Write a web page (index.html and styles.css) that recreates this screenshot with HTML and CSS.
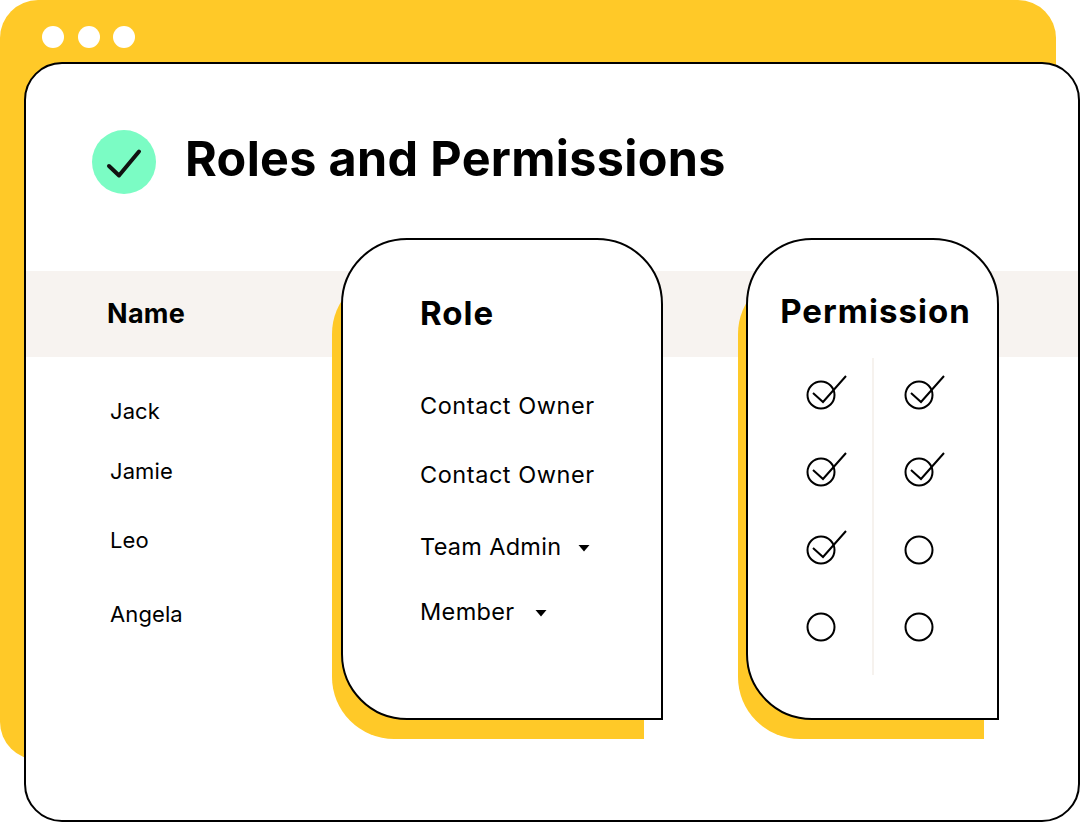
FILE: index.html
```html
<!DOCTYPE html>
<html lang="en">
<head>
<meta charset="utf-8">
<title>Roles and Permissions</title>
<link rel="stylesheet" href="styles.css">
</head>
<body>
<main class="canvas">
  <div class="backdrop">
    <div class="dots"><span class="dot"></span><span class="dot"></span><span class="dot"></span></div>
  </div>
  <section class="window">
    <header class="head">
      <span class="badge">
        <svg class="badge-check" width="64" height="64" viewBox="0 0 64 64"><path d="M17 36 L27 45.500 L47 21.500" /></svg>
      </span>
      <h1 class="title">Roles and Permissions</h1>
    </header>
    <div class="band"><span class="band-label">Name</span></div>
    <ul class="names">
      <li class="name name-jack">Jack</li>
      <li class="name name-jamie">Jamie</li>
      <li class="name name-leo">Leo</li>
      <li class="name name-angela">Angela</li>
    </ul>
  </section>

  <div class="shadow shadow-role"></div>
  <section class="card card-role">
    <h2 class="card-title">Role</h2>
    <ul class="roles">
      <li class="role role-1">Contact Owner</li>
      <li class="role role-2">Contact Owner</li>
      <li class="role role-3">Team Admin<svg class="caret" width="12" height="8" viewBox="0 0 12 8"><path d="M0.500 1 H11.500 L6 7.500 Z"/></svg></li>
      <li class="role role-4">Member<svg class="caret" width="12" height="8" viewBox="0 0 12 8"><path d="M0.500 1 H11.500 L6 7.500 Z"/></svg></li>
    </ul>
  </section>

  <div class="shadow shadow-perm"></div>
  <section class="card card-perm">
    <h2 class="perm-title">Permission</h2>
    <div class="perm-grid">
      <div class="perm-col">
        <svg class="tick" width="30" height="30" viewBox="0 0 30 30"><circle cx="15" cy="15" r="13.500"/><path d="M7 13 L17 22 L40 -4"/></svg>
        <svg class="tick" width="30" height="30" viewBox="0 0 30 30"><circle cx="15" cy="15" r="13.500"/><path d="M7 13 L17 22 L40 -4"/></svg>
        <svg class="tick" width="30" height="30" viewBox="0 0 30 30"><circle cx="15" cy="15" r="13.500"/><path d="M7 13 L17 22 L40 -4"/></svg>
        <svg class="tick" width="30" height="30" viewBox="0 0 30 30"><circle cx="15" cy="15" r="13.500"/></svg>
      </div>
      <div class="perm-col">
        <svg class="tick" width="30" height="30" viewBox="0 0 30 30"><circle cx="15" cy="15" r="13.500"/><path d="M7 13 L17 22 L40 -4"/></svg>
        <svg class="tick" width="30" height="30" viewBox="0 0 30 30"><circle cx="15" cy="15" r="13.500"/><path d="M7 13 L17 22 L40 -4"/></svg>
        <svg class="tick" width="30" height="30" viewBox="0 0 30 30"><circle cx="15" cy="15" r="13.500"/></svg>
        <svg class="tick" width="30" height="30" viewBox="0 0 30 30"><circle cx="15" cy="15" r="13.500"/></svg>
      </div>
    </div>
  </section>
</main>
</body>
</html>
```
FILE: styles.css
```css
* { box-sizing: border-box; }
html, body { margin: 0; padding: 0; background: #fff; }
body { font-family: Inter, "Liberation Sans", sans-serif; color: #000; }
h1, h2, ul { margin: 0; padding: 0; }
ul { list-style: none; }

.canvas { position: relative; width: 1080px; height: 822px; overflow: hidden; }

.backdrop {
  position: absolute; left: 0; top: 0;
  width: 1056px; height: 760px;
  background: #ffc928;
  border-radius: 38px;
  padding: 26px 0 0 42px;
}
.dots { display: flex; gap: 13.500px; }
.dot { width: 22px; height: 22px; border-radius: 50%; background: #fff; }

.window {
  position: absolute; left: 24px; top: 62px;
  width: 1056px; height: 760px;
  background: #fff;
  border: 2px solid #000;
  border-radius: 38px;
}
.head { display: flex; gap: 29px; padding: 66px 0 0 66px; height: 207px; align-items: flex-start; }
.badge { width: 64px; height: 64px; border-radius: 50%; background: #7bfcc4; flex: none; }
.badge-check { display: block; fill: none; stroke: #111; stroke-width: 4; stroke-linecap: round; stroke-linejoin: round; }
.title { font-size: 48.500px; line-height: 58px; font-weight: 700; letter-spacing: 0.320px; white-space: nowrap; }

.band { height: 86px; background: #f7f3f0; padding-left: 81px; display: flex; align-items: center; }
.band-label { font-size: 27px; font-weight: 700; letter-spacing: 0.300px; margin-top: -2px; }

.names { padding: 40px 0 0 84px; }
.name { font-size: 22px; line-height: 28px; font-weight: 400; letter-spacing: 0.100px; }
.name-jamie { margin-top: 32px; }
.name-leo { margin-top: 41px; }
.name-angela { margin-top: 46px; }

.shadow { position: absolute; background: #ffc928; }
.shadow-role { left: 332px; top: 272px; width: 312px; height: 467px; border-radius: 62px 0 0 62px; }
.shadow-perm { left: 738px; top: 272px; width: 246px; height: 467px; border-radius: 62px 0 0 62px; }

.card {
  position: absolute; top: 238px; height: 482px;
  background: #fff;
  border: 2px solid #000;
  border-radius: 66px 66px 0 66px;
}
.card-role { left: 341px; width: 322px; padding: 54px 0 0 77px; }
.card-perm { left: 746px; width: 253px; }

.card-title { font-size: 33px; line-height: 38px; font-weight: 700; letter-spacing: 1px; }
.roles { margin-top: 60px; }
.role { font-size: 23.500px; line-height: 28px; font-weight: 400; letter-spacing: 0.550px; display: flex; align-items: center; }
.role-2 { margin-top: 41px; }
.role-3 { margin-top: 44px; letter-spacing: 0.300px; }
.role-4 { margin-top: 37px; letter-spacing: 0.350px; }
.caret { fill: #000; flex: none; margin-top: 2px; }
.role-3 .caret { margin-left: 17px; }
.role-4 .caret { margin-left: 20px; }

.perm-title { font-size: 33px; line-height: 40px; font-weight: 700; letter-spacing: 1.050px; text-align: center; padding-top: 51px; padding-left: 6px; height: 118px; white-space: nowrap; }
.perm-grid { display: flex; padding-left: 22px; height: 317px; }
.perm-col { width: 102px; display: flex; flex-direction: column; align-items: center; gap: 47.400px; padding-top: 22px; }
.perm-col + .perm-col { width: 92px; border-left: 2px solid #f6f2ee; }
.tick { display: block; overflow: visible; fill: none; stroke: #000; stroke-width: 2; flex: none; }
```
